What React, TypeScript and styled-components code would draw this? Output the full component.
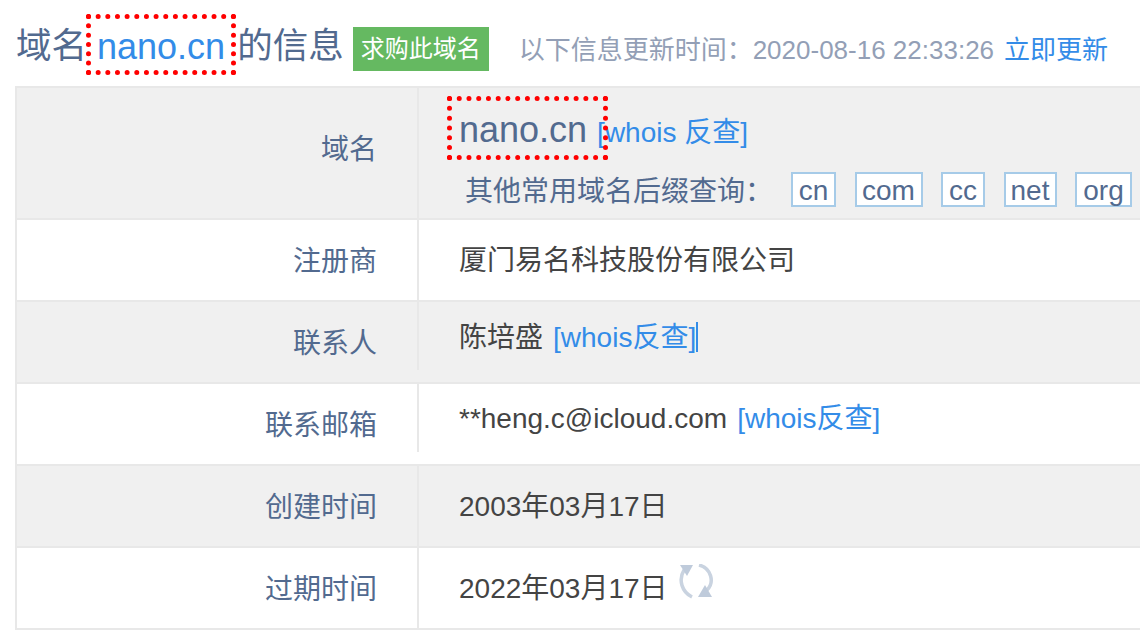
import React from "react";
import styled, { createGlobalStyle } from "styled-components";

const Global = createGlobalStyle`
  html, body { margin: 0; padding: 0; background: #fff; overflow: hidden; }
  body { font-family: "Liberation Sans", "Noto Sans CJK SC", sans-serif; }
`;
const Page = styled.div`
  width: 1140px; height: 630px; overflow: hidden;
`;
const Header = styled.div`
  display: flex; align-items: center; height: 86px; padding: 12px 0 0 16px; box-sizing: border-box; white-space: nowrap;
`;
const Title = styled.h1`
  margin: -4px 0 0; font-size: 35.5px; font-weight: 400; color: #526a8f; line-height: 1; display: flex; align-items: center;
`;
const Marked = styled.span<{ $inset: string }>`
  position: relative;
  &::after { content: ""; position: absolute; inset: ${p => p.$inset}; border: 5px dotted #f00; pointer-events: none; }
`;
const TitleName = styled(Marked)`
  color: #338ce8; margin: 0 12px 0 10px; font-size: 36px;
`;
const Buy = styled.span`
  display: block; margin-left: 9px; width: 136px; height: 44px; line-height: 44px; text-align: center; background: #65b961; color: #fff; font-size: 24px;
`;
const Updated = styled.span`
  margin: -4px 0 0 30px; font-size: 26px; color: #939fb6;
`;
const UpdateNow = styled.a`
  margin: -4px 0 0 10px; font-size: 26px; color: #338ce8;
`;
const Table = styled.div`
  margin-left: 15px; border-top: 2px solid #e8e8e8; border-left: 2px solid #e8e8e8;
`;
const Row = styled.div<{ $h: number; $shaded?: boolean }>`
  display: grid; grid-template-columns: 402px 1fr; height: ${p => p.$h}px; box-sizing: border-box; border-bottom: 2px solid #e8e8e8; background: ${p => (p.$shaded ? "#f0f0f0" : "#fff")};
`;
const Label = styled.div<{ $short?: boolean; $raise?: number }>`
  position: relative; display: flex; align-items: center; justify-content: flex-end; padding: 0 42px ${p => p.$raise ?? 2}px 0; font-size: 28px; color: #526a8f;
  &::after { content: ""; position: absolute; right: 0; top: 0; width: 2px; height: ${p => (p.$short ? "68px" : "100%")}; background: #e8e8e8; }
`;
const Value = styled.div<{ $raise: number }>`
  display: flex; align-items: center; padding: 0 0 ${p => p.$raise}px 40px; font-size: 28px; color: #444; white-space: nowrap;
`;
const ValueLine = styled.div`
  display: block;
`;
const DomainCell = styled.div`
  padding: 19px 0 0 40px; white-space: nowrap; overflow: hidden;
`;
const DomainLine = styled.div`
  display: flex; align-items: baseline;
`;
const DomainName = styled(Marked)`
  font-size: 36px; line-height: 46px; color: #526a8f;
`;
const Link = styled.a<{ $ml: number }>`
  color: #338ce8; font-size: 28px; margin-left: ${p => p.$ml}px;
`;
const Suffixes = styled.div`
  display: flex; align-items: center; margin: 16px 0 0 6px; font-size: 28px; color: #526a8f;
`;
const SuffixLabel = styled.span`
  width: 326px; flex: none;
`;
const Suffix = styled.span<{ $w: number }>`
  box-sizing: border-box; width: ${p => p.$w}px; height: 35px; line-height: 33px; margin-right: 18.5px; flex: none; text-align: center; border: 2px solid #a6cbe8; background: #fff; font-size: 28px;
`;
const Caret = styled.span`
  display: inline-block; width: 2px; height: 30px; background: #338ce8; vertical-align: -5px;
`;
const Refresh = styled.svg`
  width: 36px; height: 36px; margin: -8px 0 0 11px; flex: none;
`;

const suffixes: [string, number][] = [["cn", 45], ["com", 68], ["cc", 44], ["net", 53], ["org", 57]];

export default function App() {
  return (
    <Page>
      <Global />
      <Header>
        <Title>
          域名<TitleName $inset="-15px -11px -10px -11px">nano.cn</TitleName>的信息
        </Title>
        <Buy>求购此域名</Buy>
        <Updated>以下信息更新时间：2020-08-16 22:33:26</Updated>
        <UpdateNow>立即更新</UpdateNow>
      </Header>
      <Table>
        <Row $h={132} $shaded>
          <Label $raise={12}>域名</Label>
          <DomainCell>
            <DomainLine>
              <DomainName $inset="-11px -21px -7px -12px">nano.cn</DomainName>
              <Link $ml={10}>[whois 反查]</Link>
            </DomainLine>
            <Suffixes>
              <SuffixLabel>其他常用域名后缀查询：</SuffixLabel>
              {suffixes.map(([s, w]) => (
                <Suffix key={s} $w={w}>{s}</Suffix>
              ))}
            </Suffixes>
          </DomainCell>
        </Row>
        <Row $h={82}>
          <Label>注册商</Label>
          <Value $raise={4}>厦门易名科技股份有限公司</Value>
        </Row>
        <Row $h={82} $shaded>
          <Label $short>联系人</Label>
          <Value $raise={14}><ValueLine>陈培盛<Link $ml={10}>[whois反查]</Link><Caret /></ValueLine></Value>
        </Row>
        <Row $h={82}>
          <Label $short>联系邮箱</Label>
          <Value $raise={16}><ValueLine>**heng.c@icloud.com<Link $ml={10}>[whois反查]</Link></ValueLine></Value>
        </Row>
        <Row $h={82} $shaded>
          <Label>创建时间</Label>
          <Value $raise={4}>2003年03月17日</Value>
        </Row>
        <Row $h={82}>
          <Label>过期时间</Label>
          <Value $raise={4}>
            2022年03月17日
            <Refresh viewBox="0 0 36 36" fill="none">
              <path d="M5 6C-1 16 3 28 13 33" stroke="#c9d3e0" strokeWidth="3.5" />
              <path d="M1 1h13l-6 11z" fill="#bfcbdb" />
              <path d="M20 1C32 4 36 18 28 26" stroke="#c9d3e0" strokeWidth="3.5" />
              <path d="M19 33h14l-7-12z" fill="#bfcbdb" />
            </Refresh>
          </Value>
        </Row>
      </Table>
    </Page>
  );
}
